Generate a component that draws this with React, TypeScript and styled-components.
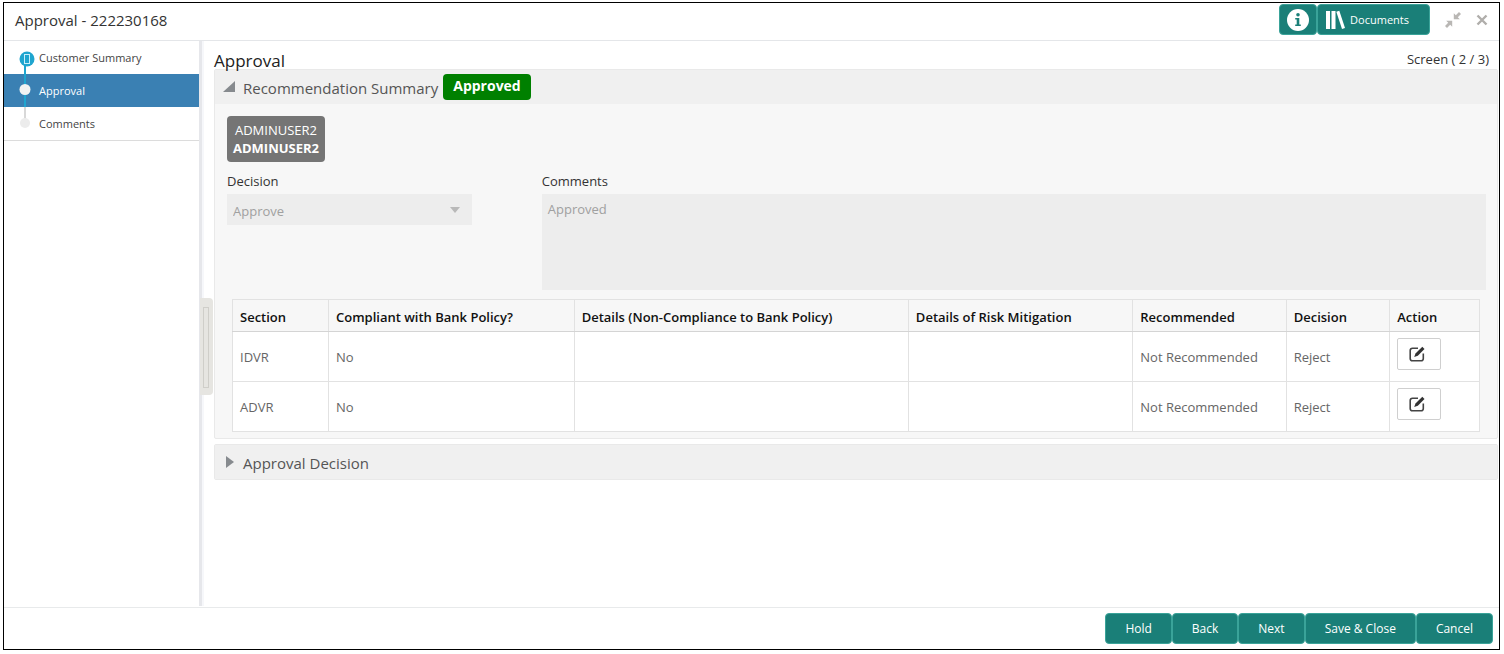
import React from "react";
import styled, { createGlobalStyle } from "styled-components";

const GlobalStyle = createGlobalStyle`
  *, *::before, *::after { box-sizing: border-box; }
  body {
    margin: 0;
    background: #fff;
    color: #333;
    font: 14px/20px "Open Sans", "Noto Sans", sans-serif;
  }
  button, select, textarea { font-family: inherit; }
`;

const Window = styled.div`
  display: flex;
  flex-direction: column;
  min-height: calc(100vh - 6px);
  margin: 2px 4px 4px 3px;
  border: 1px solid #000;
`;

const Header = styled.header`
  display: flex;
  align-items: center;
  justify-content: space-between;
  height: 38px;
  padding: 0 11px 4px;
  border-bottom: 1px solid #e4e6e9;
`;

const WindowTitle = styled.h1`
  margin: 0;
  font-size: 15px;
  line-height: 20px;
  font-weight: 400;
`;

const HeaderTools = styled.div`
  display: flex;
  align-items: center;
`;

const TealButton = styled.button`
  display: inline-flex;
  align-items: center;
  justify-content: center;
  height: 31px;
  padding: 0 19px;
  border: 1px solid #3aa399;
  border-radius: 4px;
  background: #1a7f78;
  color: #fff;
  font-size: 12px;
  line-height: 16px;
  white-space: nowrap;
`;

const InfoButton = styled(TealButton)`
  width: 38px;
  padding: 0;
`;

const DocumentsButton = styled(TealButton)`
  gap: 5px;
  padding: 0 20px 0 7px;
  font-size: 11px;
`;

const PlainIconButton = styled.button`
  display: inline-flex;
  padding: 0;
  margin-left: 15px;
  border: 0;
  background: none;
`;

const Main = styled.div`
  display: flex;
  flex: 1;
`;

const Sidebar = styled.nav`
  flex: none;
  width: 195px;
`;

const StepList = styled.ol`
  margin: 0;
  padding: 0;
  list-style: none;
  border-bottom: 1px solid #dcdcdc;
`;

const StepLink = styled.a<{ $active?: boolean }>`
  display: flex;
  align-items: center;
  gap: 3px;
  height: 33px;
  padding-left: 12px;
  background: ${(p) => (p.$active ? "#3a80b3" : "transparent")};
  color: ${(p) => (p.$active ? "#fff" : "#444")};
  font-size: 11px;
  line-height: 16px;
  text-decoration: none;
`;

const Splitter = styled.div`
  display: flex;
  flex: none;
  align-items: center;
  width: 15px;
  margin-bottom: 1px;
  background: linear-gradient(to right, #e6e7eb 0 3px, #f6f7fa 3px 5px, #fff 5px);
`;

const SplitHandle = styled.button`
  width: 13px;
  height: 97px;
  margin: 46px 0 0 1px;
  padding: 9px 4px 7px 3px;
  border: 0;
  border-radius: 0 4px 4px 0;
  background: #e6e5e1;
  &::before {
    content: "";
    display: block;
    height: 100%;
    border: 1px solid #cfcec9;
  }
`;

const Content = styled.main`
  flex: 1;
  min-width: 0;
  padding-right: 1px;
`;

const TitleRow = styled.div`
  display: flex;
  justify-content: space-between;
  height: 28px;
  padding: 8px 9px 0 0;
`;

const PageTitle = styled.h2`
  margin: 0;
  font-size: 17px;
  line-height: 24px;
  font-weight: 400;
  color: #222;
`;

const ScreenCount = styled.span`
  font-size: 13px;
  line-height: 20px;
`;

const Panel = styled.section`
  margin-bottom: 5px;
  border: 1px solid #e9e9e9;
  border-radius: 2px;
  background: #f7f7f7;
`;

const PanelHeader = styled.div`
  display: flex;
  align-items: center;
  min-height: 34px;
  background: #f0f0f0;
`;

const PanelToggle = styled.button`
  display: flex;
  align-items: center;
  gap: 8px;
  padding: 2px 5px 0 8px;
  border: 0;
  background: none;
  color: #555;
  font-size: 15px;
  line-height: 24px;
  svg { margin-bottom: 2px; }
`;

const StatusBadge = styled.span`
  padding: 2px 10px 4px;
  border-radius: 4px;
  background: #008000;
  color: #fff;
  font-size: 14px;
  line-height: 20px;
  font-weight: 700;
`;

const PanelBody = styled.div`
  padding: 12px 11px 6px 12px;
`;

const UserTag = styled.div`
  display: inline-flex;
  flex-direction: column;
  align-items: center;
  padding: 5px 6px;
  border-radius: 4px;
  background: #757575;
  color: #fff;
  font-size: 13px;
  line-height: 18px;
`;

const Fields = styled.div`
  display: grid;
  grid-template-columns: 1fr 3fr;
  margin-top: 4px;
`;

const Field = styled.div`
  display: flex;
  flex-direction: column;
`;

const Label = styled.label`
  padding: 6px 0 4px;
  font-size: 13px;
  line-height: 18px;
`;

const SelectBox = styled.div`
  display: grid;
  align-items: center;
  margin-right: 70px;
  background: #ededed;
  > * { grid-area: 1 / 1; }
  svg { justify-self: end; margin-right: 12px; pointer-events: none; }
`;

const Select = styled.select`
  appearance: none;
  width: 100%;
  height: 31px;
  padding: 2px 6px 0;
  border: 0;
  background: none;
  color: #a0a0a0;
  font-size: 13px;
  opacity: 1;
`;

const CommentBox = styled.textarea`
  display: block;
  width: 100%;
  height: 96px;
  padding: 5px 6px;
  border: 0;
  background: #ededed;
  color: #a0a0a0;
  font-size: 13px;
  line-height: 20px;
  resize: none;
`;

const Table = styled.table`
  width: calc(100% - 11px);
  margin: 9px 6px 0 5px;
  border-collapse: collapse;
  table-layout: fixed;
  border: 1px solid #dedede;
`;

const Th = styled.th<{ $w: number }>`
  width: ${(p) => p.$w}%;
  height: 32px;
  padding: 2px 7px 0;
  border: 1px solid #e2e2e2;
  border-bottom-color: #d4d4d4;
  color: #111;
  font-size: 13px;
  line-height: 20px;
  font-weight: 600;
  text-align: left;
  white-space: nowrap;
`;

const Td = styled.td`
  height: 50px;
  padding: 0 7px;
  border: 1px solid #e2e2e2;
  background: #fff;
  color: #666;
  font-size: 13px;
`;

const EditButton = styled.button`
  display: flex;
  align-items: center;
  justify-content: center;
  width: 44px;
  height: 32px;
  margin-bottom: 6px;
  padding: 0 4px 0 0;
  border: 1px solid #cfcfcf;
  border-radius: 2px;
  background: #fff;
`;

const Footer = styled.footer`
  display: flex;
  justify-content: flex-end;
  height: 42px;
  padding: 5px 6px 0;
  border-top: 1px solid #e8eaeb;
`;

const InfoIcon = () => (
  <svg width="24" height="24" viewBox="0 0 24 24" aria-hidden="true">
    <circle cx="12" cy="12" r="11" fill="#fff" />
    <circle cx="12" cy="6.700" r="1.800" fill="#1a7f78" />
    <path d="M9.200 10h4.100v6.600h1.500V18H9.200v-1.400h1.500v-5.200H9.200z" fill="#1a7f78" />
  </svg>
);

const BooksIcon = () => (
  <svg width="20" height="20" viewBox="0 0 20 20" fill="#fff" aria-hidden="true">
    <path d="M1 1h4v18H1zM6.500 1h4v18h-4zM11.300 1.800l3-1L20 18l-3 1z" />
  </svg>
);

const CollapseIcon = () => (
  <svg width="16" height="16" viewBox="0 0 16 16" fill="#b9b7b4" aria-hidden="true">
    <path d="M8.800 1.200v6h6l-2-2L16 2 14 0l-3.200 3.200zM1.200 8.800h6v6l-2-2L2 16l-2-2 3.200-3.200z" />
  </svg>
);

const CloseIcon = () => (
  <svg width="12" height="12" viewBox="0 0 12 12" stroke="#b0aeab" strokeWidth="2.400" aria-hidden="true">
    <path d="M1.500 1.500l9 9M10.500 1.500l-9 9" />
  </svg>
);

const EditIcon = () => (
  <svg width="16" height="16" viewBox="0 0 16 16" aria-hidden="true">
    <path d="M9 2.200H3.500Q1.200 2.200 1.200 4.500v8Q1.200 14.800 3.500 14.800h8.500q2.300 0 2.300-2.300V7.500" fill="none" stroke="#444" strokeWidth="1.600" />
    <path d="M13.300.7l2.200 2.200-6.700 6.800-3.600 1.300 1.300-3.600z" fill="#333" />
  </svg>
);

type StepState = "done" | "current" | "next";

const StepMarker = ({ state }: { state: StepState }) => (
  <svg width="20" height="33" viewBox="0 0 20 33" aria-hidden="true">
    {state === "done" && (
      <>
        <path d="M9 20v13" stroke="#1fa5cf" strokeWidth="2" />
        <circle cx="11" cy="18" r="7.500" fill="#1fa5cf" />
        <rect x="8.500" y="13.500" width="5" height="9" fill="none" stroke="#c8eefa" />
      </>
    )}
    {state === "current" && (
      <>
        <path d="M9 0v33" stroke="#1fa5cf" strokeWidth="2" />
        <circle cx="9" cy="15.500" r="5.500" fill="#f2f2f2" />
      </>
    )}
    {state === "next" && (
      <>
        <path d="M9 0v12" stroke="#d8d8d8" strokeWidth="2" />
        <circle cx="9" cy="16" r="5" fill="#ececec" />
      </>
    )}
  </svg>
);

const steps: { label: string; state: StepState }[] = [
  { label: "Customer Summary", state: "done" },
  { label: "Approval", state: "current" },
  { label: "Comments", state: "next" },
];

const columns = [
  { label: "Section", width: 7.7 },
  { label: "Compliant with Bank Policy?", width: 19.7 },
  { label: "Details (Non-Compliance to Bank Policy)", width: 26.8 },
  { label: "Details of Risk Mitigation", width: 18 },
  { label: "Recommended", width: 12.3 },
  { label: "Decision", width: 8.3 },
  { label: "Action", width: 7.2 },
];

const rows = [
  ["IDVR", "No", "", "", "Not Recommended", "Reject"],
  ["ADVR", "No", "", "", "Not Recommended", "Reject"],
];

const actions = ["Hold", "Back", "Next", "Save & Close", "Cancel"];

export default function App() {
  return (
    <>
      <GlobalStyle />
      <Window>
        <Header>
          <WindowTitle>Approval - 222230168</WindowTitle>
          <HeaderTools>
            <InfoButton aria-label="Information"><InfoIcon /></InfoButton>
            <DocumentsButton><BooksIcon />Documents</DocumentsButton>
            <PlainIconButton aria-label="Collapse"><CollapseIcon /></PlainIconButton>
            <PlainIconButton aria-label="Close"><CloseIcon /></PlainIconButton>
          </HeaderTools>
        </Header>
        <Main>
          <Sidebar>
            <StepList>
              {steps.map((s) => (
                <li key={s.label}>
                  <StepLink href="#" $active={s.state === "current"}>
                    <StepMarker state={s.state} />
                    {s.label}
                  </StepLink>
                </li>
              ))}
            </StepList>
          </Sidebar>
          <Splitter>
            <SplitHandle aria-label="Resize" />
          </Splitter>
          <Content>
            <TitleRow>
              <PageTitle>Approval</PageTitle>
              <ScreenCount>Screen ( 2 / 3)</ScreenCount>
            </TitleRow>
            <Panel>
              <PanelHeader>
                <PanelToggle aria-expanded="true">
                  <svg width="12" height="12" viewBox="0 0 12 12" aria-hidden="true">
                    <path d="M12 0v11H0z" fill="#868a8e" />
                  </svg>
                  Recommendation Summary
                </PanelToggle>
                <StatusBadge>Approved</StatusBadge>
              </PanelHeader>
              <PanelBody>
                <UserTag>
                  <span>ADMINUSER2</span>
                  <strong>ADMINUSER2</strong>
                </UserTag>
                <Fields>
                  <Field>
                    <Label htmlFor="decision">Decision</Label>
                    <SelectBox>
                      <Select id="decision" disabled defaultValue="Approve">
                        <option>Approve</option>
                      </Select>
                      <svg width="10" height="6" viewBox="0 0 10 6" aria-hidden="true">
                        <path d="M0 0h10L5 6z" fill="#b9b9b9" />
                      </svg>
                    </SelectBox>
                  </Field>
                  <Field>
                    <Label htmlFor="comments">Comments</Label>
                    <CommentBox id="comments" disabled defaultValue="Approved" />
                  </Field>
                </Fields>
                <Table>
                  <thead>
                    <tr>
                      {columns.map((c) => (
                        <Th key={c.label} $w={c.width} scope="col">{c.label}</Th>
                      ))}
                    </tr>
                  </thead>
                  <tbody>
                    {rows.map((r) => (
                      <tr key={r[0]}>
                        {r.map((cell, i) => (
                          <Td key={i}>{cell}</Td>
                        ))}
                        <Td>
                          <EditButton aria-label={`Edit ${r[0]}`}><EditIcon /></EditButton>
                        </Td>
                      </tr>
                    ))}
                  </tbody>
                </Table>
              </PanelBody>
            </Panel>
            <Panel>
              <PanelHeader>
                <PanelToggle aria-expanded="false">
                  <svg width="12" height="12" viewBox="0 0 12 12" aria-hidden="true">
                    <path d="M3 0l8 6-8 6z" fill="#868a8e" />
                  </svg>
                  Approval Decision
                </PanelToggle>
              </PanelHeader>
            </Panel>
          </Content>
        </Main>
        <Footer>
          {actions.map((a) => (
            <TealButton key={a}>{a}</TealButton>
          ))}
        </Footer>
      </Window>
    </>
  );
}
